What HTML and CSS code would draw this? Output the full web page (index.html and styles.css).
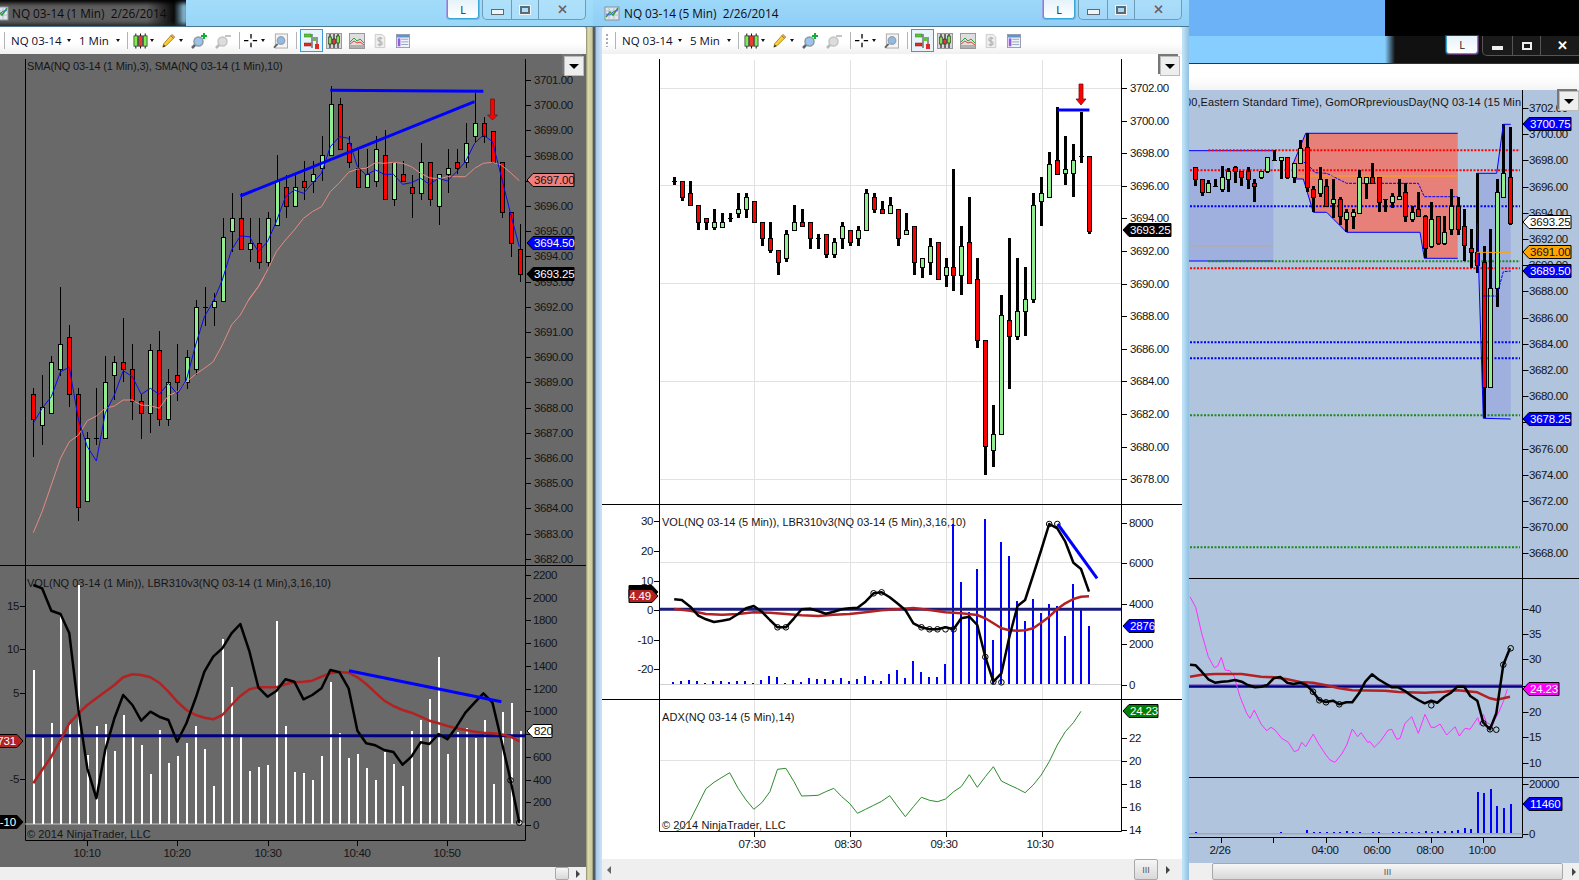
FILE: index.html
```html
<!DOCTYPE html>
<html lang="en">

<head>
    <meta charset="UTF-8">
    <title>NQ 03-14 charts</title>
    <link rel="stylesheet" href="styles.css">
</head>

<body>
    <!-- toolbar icons -->
    <svg class="icon-defs" xmlns="http://www.w3.org/2000/svg">
        <symbol id="ico-title" viewBox="0 0 16 16">
            <rect x="1" y="2" width="14" height="13" fill="#dfe6ee" stroke="#8a8f9a" />
            <path d="M1 6h14M1 10h14M5 2v13M10 2v13" stroke="#b9c0ca" fill="none" />
            <path d="M2 12l4-5 3 3 5-7" stroke="#2f9e3f" stroke-width="1.5" fill="none" />
            <path d="M2 9l4 1 3-3 5-2" stroke="#3b6fd0" fill="none" />
        </symbol>
        <symbol id="ico-candles" viewBox="0 0 16 16">
            <path d="M3 0v16M8 0v16M13 0v16" stroke="#000" />
            <rect x="1" y="2.500" width="4" height="11" fill="#7cf04a" stroke="#333" stroke-width=".8" />
            <rect x="6" y="2.500" width="4" height="11" fill="#f03a2e" stroke="#333" stroke-width=".8" />
            <rect x="11" y="2.500" width="4" height="11" fill="#7cf04a" stroke="#333" stroke-width=".8" />
        </symbol>
        <symbol id="ico-pencil" viewBox="0 0 16 16">
            <path d="M1 15l1-4 8-9 3 3-8 8z" fill="#f7cf3a" stroke="#a87a10" />
            <path d="M10 2l1.500-1.500 3 3L13 5z" fill="#e8a0a0" stroke="#a87a10" />
            <path d="M1 15l1-3 2 2z" fill="#333" />
        </symbol>
        <symbol id="ico-zoom-in" viewBox="0 0 16 16">
            <path d="M5 11l-4 4" stroke="#5b6470" stroke-width="2.500" />
            <circle cx="7.500" cy="8.500" r="4.500" fill="#9cc4e8" stroke="#8c98a5" stroke-width="1.500" />
            <path d="M13 0v6M10 3h6" stroke="#10b030" stroke-width="2" />
        </symbol>
        <symbol id="ico-zoom-out" viewBox="0 0 16 16">
            <path d="M5 11l-4 4" stroke="#b8b8b8" stroke-width="2.500" />
            <circle cx="7.500" cy="8.500" r="4.500" fill="#dcdcdc" stroke="#c4c4c4" stroke-width="1.500" />
            <path d="M10 3h6" stroke="#c4c4c4" stroke-width="2" />
        </symbol>
        <symbol id="ico-cross" viewBox="0 0 16 16">
            <path d="M8 0v5M8 10v5M0 7.500h5M10 7.500h5" stroke="#000" stroke-width="1.500" />
        </symbol>
        <symbol id="ico-find" viewBox="0 0 16 16">
            <rect x="2.500" y="0.500" width="13" height="15" fill="#f4f4f4" stroke="#a8a8a8" />
            <path d="M5 11l-4 4" stroke="#666" stroke-width="2" />
            <circle cx="8.500" cy="7.500" r="4" fill="#8fbce6" stroke="#9aa4ae" stroke-width="1.500" />
        </symbol>
        <symbol id="ico-flags" viewBox="0 0 16 16">
            <path d="M8 1v14M13 4v12" stroke="#333" />
            <rect x="0" y="1" width="7" height="3" fill="#5ec23a" stroke="#2c7a1c" stroke-width=".5" />
            <rect x="0" y="10" width="7" height="3" fill="#e02a20" stroke="#8a1a14" stroke-width=".5" />
            <rect x="9" y="4" width="3" height="4" fill="#5ec23a" />
            <rect x="11" y="11" width="4" height="5" fill="#e02a20" />
        </symbol>
        <symbol id="ico-framed-candles" viewBox="0 0 16 16">
            <rect x=".5" y=".5" width="15" height="15" fill="#d8d8d8" stroke="#999" />
            <path d="M4 1v14M8 1v14M12 1v14" stroke="#000" />
            <rect x="2.500" y="4" width="3" height="7" fill="#7ee04a" stroke="#222" stroke-width=".6" />
            <rect x="6.500" y="6" width="3" height="5" fill="#e93a2e" stroke="#222" stroke-width=".6" />
            <rect x="10.500" y="3" width="3" height="7" fill="#7ee04a" stroke="#222" stroke-width=".6" />
        </symbol>
        <symbol id="ico-framed-lines" viewBox="0 0 16 16">
            <rect x=".5" y=".5" width="15" height="15" fill="#dedede" stroke="#999" />
            <path d="M1 9l4-4 3 3 3-2 4 4" stroke="#2f9e3f" fill="none" />
            <path d="M1 11l4-3 3 2 3-1 4 3" stroke="#e0453a" fill="none" />
            <rect x="1" y="12" width="14" height="3" fill="#b0b0b0" />
        </symbol>
        <symbol id="ico-money" viewBox="0 0 16 16">
            <path d="M2.500.5h8l3 3v12h-11z" fill="#eee" stroke="#c8c8c8" />
            <path d="M10.500 5.500C9.500 4 5.500 4 5.500 6.500S10.500 8 10.500 10.500 6.500 13 5.500 11.500M8 3v11" fill="none" stroke="#b4b4b4" stroke-width="1.400" />
        </symbol>
        <symbol id="ico-sheet" viewBox="0 0 16 16">
            <rect x=".5" y=".5" width="15" height="15" fill="#f2f2fa" stroke="#8f95a8" />
            <rect x="1" y="1" width="14" height="3" fill="#5b96c8" />
            <rect x="2" y="5" width="3" height="9" fill="#9a58e8" />
            <path d="M6 6h8M6 9h8M6 12h8" stroke="#8aa0c0" />
        </symbol>
    </svg>

    <!-- left window, 1 min -->
    <section class="win win-one">
        <div class="titlebar">
            <div class="title-glow"></div>
            <svg class="title-icon"><use href="#ico-title" /></svg>
            <span class="title-text">NQ 03-14 (1 Min)  2/26/2014</span>
            <button class="link-btn">L</button>
            <div class="win-ctrls">
                <span class="ctrl ctrl-min"><i></i></span>
                <span class="ctrl ctrl-max"><i></i></span>
                <span class="ctrl ctrl-close">✕</span>
            </div>
        </div>
        <div class="toolbar">
            <span class="grip"></span>
            <span class="tb-sep m7"></span>
            <span class="tb-text tb-symbol m6">NQ 03-14</span>
            <span class="caret m6"></span>
            <span class="tb-text tb-interval m8">1 Min</span>
            <span class="caret m6"></span>
            <span class="tb-sep m7"></span>
            <svg class="tb-ico w15 m5"><use href="#ico-candles" /></svg>
            <span class="caret m2"></span>
            <svg class="tb-ico w14 m8"><use href="#ico-pencil" /></svg>
            <span class="caret m3"></span>
            <svg class="tb-ico w16 m8"><use href="#ico-zoom-in" /></svg>
            <svg class="tb-ico w16 m8"><use href="#ico-zoom-out" /></svg>
            <span class="tb-sep m8"></span>
            <svg class="tb-ico w14 m4"><use href="#ico-cross" /></svg>
            <span class="caret m3"></span>
            <svg class="tb-ico w15 m8"><use href="#ico-find" /></svg>
            <span class="tb-sep m8"></span>
            <span class="tb-toggle m3"><svg class="tb-ico w16"><use href="#ico-flags" /></svg></span>
            <svg class="tb-ico w16 m3"><use href="#ico-framed-candles" /></svg>
            <svg class="tb-ico w16 m7"><use href="#ico-framed-lines" /></svg>
            <svg class="tb-ico w14 m8"><use href="#ico-money" /></svg>
            <svg class="tb-ico w14 m9"><use href="#ico-sheet" /></svg>
        </div>
        <div class="chart chart-one">
            <svg id="chart-one" class="plot"></svg>
            <button class="panel-btn"></button>
        </div>
        <div class="scrollbar scroll-one">
            <span class="thumb"><b>III</b></span>
            <span class="arrow-right"></span>
        </div>
    </section>

    <!-- right window, 15 min, mostly covered -->
    <section class="win win-three">
        <div class="titlebar">
            <button class="link-btn">L</button>
            <div class="win-ctrls">
                <span class="ctrl ctrl-min"><i></i></span>
                <span class="ctrl ctrl-max"><i></i></span>
                <span class="ctrl ctrl-close">✕</span>
            </div>
        </div>
        <div class="toolbar"></div>
        <div class="chart chart-three">
            <svg id="chart-three" class="plot"></svg>
            <button class="panel-btn"></button>
        </div>
        <div class="scrollbar scroll-three">
            <span class="thumb"><b>III</b></span>
            <span class="arrow-right"></span>
        </div>
    </section>

    <!-- middle window, 5 min -->
    <section class="win win-two">
        <div class="titlebar">
            <svg class="title-icon"><use href="#ico-title" /></svg>
            <span class="title-text">NQ 03-14 (5 Min)  2/26/2014</span>
            <button class="link-btn">L</button>
            <div class="win-ctrls">
                <span class="ctrl ctrl-min"><i></i></span>
                <span class="ctrl ctrl-max"><i></i></span>
                <span class="ctrl ctrl-close">✕</span>
            </div>
        </div>
        <div class="toolbar">
            <span class="grip"></span>
            <span class="tb-sep m7"></span>
            <span class="tb-text tb-symbol m6">NQ 03-14</span>
            <span class="caret m6"></span>
            <span class="tb-text tb-interval m8">5 Min</span>
            <span class="caret m6"></span>
            <span class="tb-sep m7"></span>
            <svg class="tb-ico w15 m5"><use href="#ico-candles" /></svg>
            <span class="caret m2"></span>
            <svg class="tb-ico w14 m8"><use href="#ico-pencil" /></svg>
            <span class="caret m3"></span>
            <svg class="tb-ico w16 m8"><use href="#ico-zoom-in" /></svg>
            <svg class="tb-ico w16 m8"><use href="#ico-zoom-out" /></svg>
            <span class="tb-sep m8"></span>
            <svg class="tb-ico w14 m4"><use href="#ico-cross" /></svg>
            <span class="caret m3"></span>
            <svg class="tb-ico w15 m8"><use href="#ico-find" /></svg>
            <span class="tb-sep m8"></span>
            <span class="tb-toggle m3"><svg class="tb-ico w16"><use href="#ico-flags" /></svg></span>
            <svg class="tb-ico w16 m3"><use href="#ico-framed-candles" /></svg>
            <svg class="tb-ico w16 m7"><use href="#ico-framed-lines" /></svg>
            <svg class="tb-ico w14 m8"><use href="#ico-money" /></svg>
            <svg class="tb-ico w14 m9"><use href="#ico-sheet" /></svg>
        </div>
        <div class="chart chart-two">
            <svg id="chart-two" class="plot"></svg>
            <button class="panel-btn"></button>
        </div>
        <div class="scrollbar scroll-two">
            <span class="arrow-left"></span>
            <span class="thumb"><b>III</b></span>
            <span class="arrow-right"></span>
        </div>
    </section>

    <script src="charts.js"></script>
</body>

</html>
```

FILE: styles.css
```css
/* page */
html, body {
    margin: 0;
    height: 100%;
    overflow: hidden;
}

body {
    position: relative;
    background: linear-gradient(90deg, #6bb2f7 1385px, #000 1385px);
    font-family: "Liberation Sans", Arial, sans-serif;
}

.icon-defs {
    position: absolute;
    width: 0;
    height: 0;
}

/* windows on the desktop */
.win {
    position: absolute;
    top: 0;
    height: 880px;
    display: flex;
    flex-direction: column;
    box-sizing: border-box;
    padding: 0 7px 0 9px;
}

.win-one {
    left: -18px;
    width: 611px;
    background: linear-gradient(90deg, #c4e4f8 0 603px, #8a8a70 604px, #dcdcaa 606px, #c8c8a0 610px, #7a7a68 611px);
}

.win-two {
    left: 593px;
    width: 596px;
    background: linear-gradient(90deg, #4f5a68 0 2px, #a6c6e6 3px, #c8e0f8 8px, #c0e2f8 590px, #8fc0e0 596px);
}

.win-three {
    left: 1180px;
    top: 36px;
    width: 399px;
    height: 844px;
    padding: 0;
    background: #b0c4de;
}

/* title bar */
.titlebar {
    position: relative;
    height: 27px;
    flex: none;
    display: flex;
    align-items: flex-start;
    box-sizing: border-box;
    padding-top: 4px;
    border-bottom: 1px solid #4d7890;
    margin: 0 -7px 0 -9px;
    padding-left: 9px;
    padding-right: 7px;
    background: linear-gradient(#9cd8f8, #90cef7);
}

.win-one .titlebar {
    background: linear-gradient(#a2dcfa, #98d6f7);
}

.win-three .titlebar {
    margin: 0;
    height: 28px;
    padding: 0;
    border-bottom: 1px solid #333;
    background: linear-gradient(90deg, #85ceff 205px, #111 215px);
}

.title-glow {
    position: absolute;
    left: 0;
    top: 0;
    width: 204px;
    height: 26px;
    background: linear-gradient(90deg, #5e5e5e 165px, #0a0a0a 192px, rgba(0, 0, 0, 0) 204px);
    box-shadow: inset 0 5px 4px -2px #000, inset 0 -4px 4px -2px #222;
}

.title-icon {
    position: relative;
    width: 16px;
    height: 16px;
    margin: 1px 0 0 2px;
}

.title-text {
    position: relative;
    margin-left: 4px;
    margin-top: 1px;
    font-family: "Open Sans", sans-serif;
    font-size: 11.800px;
    line-height: 16px;
    white-space: pre;
    color: #0c0c10;
}

.win-one .title-text {
    margin-left: 3px;
}

.link-btn {
    flex: none;
    margin-left: auto;
    margin-top: -4px;
    width: 32px;
    height: 19px;
    padding: 0;
    border: 1px solid #3aa6d8;
    border-top: none;
    border-radius: 0 0 3px 3px;
    background: linear-gradient(#e6f2fa, #fff);
    box-shadow: 0 0 0 1px rgba(170, 90, 210, .45);
    font-family: "Open Sans", sans-serif;
    font-size: 11px;
    color: #222;
}

.win-ctrls {
    flex: none;
    display: flex;
    height: 19px;
    margin-top: -4px;
    margin-left: 3px;
    border: 1px solid #6c9cb8;
    border-top: none;
    border-radius: 0 0 5px 5px;
    background: rgba(255, 255, 255, .15);
}

.ctrl {
    display: flex;
    align-items: center;
    justify-content: center;
    border-left: 1px solid #6c9cb8;
    color: #5d6a74;
    font-size: 13px;
    font-weight: bold;
    text-shadow: 0 0 1px #fff;
}

.ctrl-min {
    width: 28px;
    border-left: none;
}

.ctrl-min i {
    width: 11px;
    height: 4px;
    margin-top: 5px;
    border: 1px solid #5d6a74;
    background: #eef4f8;
}

.ctrl-max {
    width: 26px;
}

.ctrl-max i {
    width: 6px;
    height: 4px;
    border: 2px solid #5d6a74;
    outline: 1px solid #eef4f8;
}

.ctrl-close {
    width: 46px;
}

.win-three .link-btn {
    margin: 0 4px 0 266px;
    height: 18px;
}

.win-three .win-ctrls {
    margin: 0;
    border-color: #555;
    background: #1a1a1a;
}

.win-three .ctrl {
    color: #fff;
    border-color: #555;
    text-shadow: none;
}

.win-three .ctrl-min {
    width: 29px;
}

.win-three .ctrl-max {
    width: 27px;
}

.win-three .ctrl-close {
    width: 42px;
}

.win-three .ctrl-min i {
    border: none;
    background: #eee;
}

.win-three .ctrl-max i {
    border-color: #eee;
    outline: none;
}

/* toolbar */
.toolbar {
    height: 27px;
    flex: none;
    display: flex;
    align-items: center;
    background: linear-gradient(#fff 60%, #f0f0f0);
    border-radius: 3px 3px 0 0;
}

.win-three .toolbar {
    background: linear-gradient(#fff 50%, #f4f4f4);
    border-radius: 0;
    height: 26px;
}

.grip {
    width: 2px;
    height: 13px;
    margin-left: 4px;
    background: repeating-linear-gradient(#aaa 0 2px, transparent 2px 4px);
}

.tb-sep {
    width: 1px;
    height: 17px;
    background: #b4b4b4;
}

.tb-text {
    font-family: "Open Sans", sans-serif;
    font-size: 11.500px;
    color: #0d0d30;
    white-space: nowrap;
}

.tb-symbol {
    width: 50px;
}

.tb-interval {
    width: 31px;
}

.caret {
    width: 0;
    height: 0;
    border: 2.500px solid transparent;
    border-top: 3px solid #111;
    border-bottom: none;
}

.tb-ico {
    height: 16px;
    flex: none;
}

.tb-toggle {
    display: flex;
    align-items: center;
    justify-content: center;
    width: 21px;
    height: 21px;
    border: 1px solid #3a9ad9;
    background: #e8f4fc;
}

.w14 { width: 14px; }
.w15 { width: 15px; }
.w16 { width: 16px; }

.m2 { margin-left: 2px; }
.m3 { margin-left: 3px; }
.m4 { margin-left: 4px; }
.m5 { margin-left: 5px; }
.m6 { margin-left: 6px; }
.m7 { margin-left: 7px; }
.m8 { margin-left: 8px; }
.m9 { margin-left: 9px; }

/* chart */
.chart {
    position: relative;
    flex: 1;
    min-height: 0;
}

.chart-one {
    background: #696969;
}

.chart-two {
    background: #fff;
}

.chart-three {
    background: #b0c4de;
}

.plot {
    display: block;
    width: 100%;
    height: 100%;
}

.panel-btn {
    position: absolute;
    top: 2px;
    right: 2px;
    width: 20px;
    height: 20px;
    padding: 0;
    border: 1px solid #bbb;
    background: #eee;
    box-shadow: -2px -2px 0 #777;
}

.panel-btn::after {
    content: "";
    display: block;
    margin: 0 auto;
    width: 0;
    border: 5px solid transparent;
    border-top: 5px solid #000;
    border-bottom: none;
}

.chart-three .panel-btn {
    right: 0;
    top: 1px;
}

.axis-text {
    font-family: "Liberation Sans", Arial, sans-serif;
    font-size: 11.500px;
    letter-spacing: -.4px;
    fill: #151515;
}

.legend-text {
    font-family: "Liberation Sans", Arial, sans-serif;
    font-size: 11px;
    letter-spacing: -.15px;
    fill: #151515;
}

.legend-wide {
    letter-spacing: 0;
}

.legend-wider {
    letter-spacing: .1px;
}

.tag-text {
    font-family: "Liberation Sans", Arial, sans-serif;
    font-size: 11.500px;
    letter-spacing: -.15px;
}

.crisp {
    shape-rendering: crispEdges;
}

/* scroll bar */
.scrollbar {
    flex: none;
    position: relative;
    display: flex;
    align-items: center;
    justify-content: flex-end;
    background: #efefef;
}

.scroll-one {
    height: 13px;
}

.scroll-two {
    height: 21px;
    justify-content: flex-start;
}

.scroll-three {
    height: 17px;
}

.thumb {
    display: flex;
    align-items: center;
    justify-content: center;
    box-sizing: border-box;
    height: 100%;
    border: 1px solid #a8a8a8;
    border-radius: 2px;
    background: linear-gradient(#f6f6f6, #d8d8d8);
}

.thumb b {
    font-family: "Liberation Sans", sans-serif;
    font-size: 9px;
    font-weight: normal;
    color: #555;
}

.scroll-one .thumb {
    width: 14px;
    margin-right: 17px;
}

.scroll-one .thumb b {
    display: none;
}

.scroll-two .thumb {
    width: 24px;
    margin-left: 523px;
}

.scroll-three .thumb {
    width: 351px;
    margin-right: 16px;
}

.arrow-right,
.arrow-left {
    width: 0;
    height: 0;
    border: 4px solid transparent;
}

.arrow-right {
    border-left: 4px solid #444;
    border-right: none;
}

.arrow-left {
    margin-left: 5px;
    border-right: 4px solid #666;
    border-left: none;
}

.scroll-one .arrow-right {
    position: absolute;
    right: 6px;
}

.scroll-two .arrow-right {
    margin-left: 8px;
}

.scroll-three .arrow-right {
    position: absolute;
    right: 3px;
}
```

FILE: charts.js
```js
// candles: [kind, bodyTop, bodyBottom, wickTop, wickBottom], kind r/g/d
const GREEN = '#90ee90', RED = '#ff0000', BLUE = '#0000ff', NAVY = '#000080';

function line(x1, y1, x2, y2, color, w, extra) {
    return `<line x1="${x1}" y1="${y1}" x2="${x2}" y2="${y2}" stroke="${color}" stroke-width="${w || 1}" ${extra || ''}/>`;
}

function label(x, y, text, anchor, cls) {
    return `<text x="${x}" y="${y + 4}" text-anchor="${anchor || 'start'}" class="${cls || 'axis-text'}">${text}</text>`;
}

function poly(list, fx, fy, color, w, extra) {
    const p = list.map(a => fx(a[0]).toFixed(1) + ',' + fy(a[1]).toFixed(1)).join(' ');
    return `<polyline points="${p}" fill="none" stroke="${color}" stroke-width="${w}" stroke-linejoin="round" ${extra || ''}/>`;
}

function circles(list, fx, fy) {
    return list.map(a => `<circle cx="${fx(a[0]).toFixed(1)}" cy="${fy(a[1]).toFixed(1)}" r="2.8" fill="none" stroke="#000"/>`).join('');
}

function candles(data, x0, step, fx, fy, wick, first) {
    let out = '<g class="crisp">';
    data.forEach((c, i) => {
        const x = Math.round(fx(x0 + step * (i + (first || 0))));
        const half = (wick - 1) / 2;
        const wt = Math.round(fy(c[3])), wb = Math.round(fy(c[4]));
        out += `<rect x="${x - half}" y="${wt}" width="${wick}" height="${wb - wt}" fill="#000"/>`;
        const t = Math.round(fy(c[1])), b = Math.round(fy(c[2]));
        if (c[0] === 'd') {
            out += `<rect x="${x - 2}" y="${t}" width="5" height="1" fill="#000"/>`;
        } else {
            out += `<rect x="${x - 2}" y="${t}" width="5" height="${b - t + 1}" fill="#000"/>`;
            out += `<rect x="${x - 1}" y="${t + 1}" width="3" height="${b - t - 1}" fill="${c[0] === 'g' ? GREEN : RED}"/>`;
        }
    });
    return out + '</g>';
}

function bars(list, x0, step, fx, fy, base, color, w) {
    return '<g class="crisp">' + list.map((top, i) => {
        const t = Math.round(fy(top));
        return `<rect x="${Math.round(fx(x0 + step * i))}" y="${t}" width="${w}" height="${Math.round(fy(base)) - t}" fill="${color}"/>`;
    }).join('') + '</g>';
}

// price marker with a point to the left, or to the right for the left scale
function tag(x, y, w, text, bg, fg, side) {
    const h = 13, t = y - h / 2, b = y + h / 2, r = x + w;
    const pts = side === 'right'
        ? `${x},${t} ${r - 6},${t} ${r},${y} ${r - 6},${b} ${x},${b}`
        : `${x},${y} ${x + 6},${t} ${r},${t} ${r},${b} ${x + 6},${b}`;
    const tx = side === 'right' ? r - 7 : x + 7;
    return `<polygon points="${pts}" fill="${bg}" stroke="#000"/>` +
        `<text x="${tx}" y="${y + 4}" text-anchor="${side === 'right' ? 'end' : 'start'}" class="tag-text" fill="${fg}">${text}</text>`;
}

function arrowDown(x, top, shaftEnd, tip) {
    return `<polygon points="${x - 2},${top} ${x + 2},${top} ${x + 2},${shaftEnd} ${x + 5},${shaftEnd} ${x},${tip} ${x - 5},${shaftEnd} ${x - 2},${shaftEnd}" fill="${RED}" stroke="#7a1010" stroke-width=".8"/>`;
}

function mount(id, vb, body) {
    const el = document.getElementById(id);
    el.setAttribute('viewBox', vb.join(' '));
    el.innerHTML = body;
}

/* ---------- left window, 1 min ---------- */
function drawOne() {
    const fx = X => X / 2.613;
    const top = Y => Y / 3, low = Y => 280 + Y / 3, pane = Y => 570 + Y / 3;
    const early = [
        ['r',343,418,325,532],['g',382,436,285,495],['g',247,400,228,400],['g',193,268,20,288],
        ['r',172,343,135,382],['r',343,682,325,722],['g',475,664,457,664],['d',475,475,325,495],
        ['g',305,475,228,475],['g',247,286,228,360],['r',247,268,115,305],['r',268,362,192,420],
        ['r',362,400,343,476],['g',211,400,192,458],['r',211,418,153,437],['g',305,418,268,437],
        ['r',286,305,192,362],['g',230,305,210,327],['g',80,268,60,286],['d',80,80,20,137],
        ['g',62,80,40,137]
    ];
    const late = [
        ['g',712,902,655,902],['g',655,692,580,755],['r',655,748,580,748],['g',730,748,655,785],
        ['r',730,786,655,806],['g',655,786,635,806],['g',542,674,466,674],['r',560,617,525,655],
        ['g',560,617,525,617],['r',542,560,484,600],['g',523,542,484,580],['g',466,503,408,542],
        ['g',313,466,258,466],['r',313,448,295,448],['r',428,485,408,503],['r',503,560,448,560],
        ['g',523,560,448,560],['g',448,542,408,560],['r',466,598,390,598],['g',485,598,485,617],
        ['r',523,542,484,542],['r',560,580,525,655],['g',485,580,428,600],['r',485,598,485,617],
        ['g',523,617,523,674],['g',503,523,448,580],['r',485,503,448,523],['g',428,485,370,503],
        ['g',370,408,280,428],['r',370,408,350,428],['r',392,485,392,485],['r',485,635,485,655],
        ['r',635,730,635,770],['r',748,823,672,845]
    ];
    const smaFastLow = [[87,430],[110,385],[134,350],[158,275],[181,262],[205,420],[228,500],[252,543],[275,400],[299,345],[322,272],[346,290],[369,343],[393,325],[416,343],[440,310],[463,342],[487,300],[511,195],[534,110],[557,65],[581,0]];
    const smaFastTop = [[581,840],[605,750],[628,708],[652,710],[675,755],[699,725],[722,665],[746,590],[769,570],[793,580],[816,550],[840,520],[863,440],[887,410],[911,415],[934,500],[957,525],[981,510],[1004,523],[1028,523],[1052,553],[1075,548],[1099,535],[1122,553],[1146,535],[1169,543],[1193,515],[1216,485],[1240,430],[1263,405],[1287,425],[1310,530],[1334,640],[1357,740]];
    const smaSlowLow = [[87,758],[110,695],[134,615],[158,535],[181,485],[205,465],[228,422],[252,408],[275,385],[299,378],[322,360],[346,360],[369,375],[393,377],[416,385],[440,347],[463,335],[487,305],[511,283],[534,265],[557,245],[581,195],[605,135],[628,105],[652,55],[675,20],[690,-10]];
    const smaSlowTop = [[650,900],[675,860],[699,810],[722,755],[746,720],[769,690],[793,655],[816,635],[840,620],[863,575],[887,548],[911,517],[934,507],[957,505],[981,488],[1004,490],[1028,487],[1052,490],[1075,500],[1099,520],[1122,533],[1146,537],[1169,530],[1193,530],[1216,530],[1240,505],[1263,490],[1287,487],[1310,495],[1334,518],[1357,542]];
    const vol = [300,505,460,135,462,45,555,467,462,543,435,500,525,612,480,580,558,518,468,537,648,207,350,500,603,590,585,153,467,606,608,630,558,335,490,564,552,594,630,545,582,648,484,450,387,262,552,487,475,504,450,642,426,400,484];
    const osc = [[87,45],[110,55],[134,122],[158,132],[181,190],[205,420],[228,595],[252,685],[275,540],[299,445],[322,375],[346,405],[369,452],[393,425],[416,440],[440,450],[463,515],[487,460],[511,385],[534,305],[557,260],[581,235],[605,190],[628,162],[652,245],[675,352],[699,380],[722,363],[746,328],[769,335],[793,388],[816,375],[840,355],[863,300],[887,307],[911,355],[934,482],[957,520],[981,526],[1004,540],[1028,546],[1052,584],[1075,560],[1099,517],[1122,522],[1146,492],[1169,508],[1193,470],[1216,428],[1240,398],[1263,370],[1287,398],[1310,510],[1334,630],[1357,758]];
    const sig = [[87,640],[110,600],[134,560],[158,510],[181,460],[205,430],[228,405],[252,385],[275,365],[299,345],[322,322],[346,313],[369,315],[393,322],[416,338],[440,365],[463,395],[487,420],[511,435],[534,443],[557,448],[581,435],[605,405],[628,378],[652,358],[675,352],[699,352],[722,352],[746,343],[769,337],[793,335],[816,332],[840,320],[863,310],[887,306],[911,308],[934,322],[957,342],[981,368],[1004,392],[1028,408],[1052,420],[1075,428],[1099,440],[1122,452],[1146,460],[1169,468],[1193,475],[1216,480],[1240,485],[1263,488],[1287,490],[1310,493],[1334,500],[1357,514]];

    let s = '';
    // axes
    s += line(25.5, 59, 25.5, 840.5, '#000') + line(525.5, 59, 525.5, 840.5, '#000');
    s += line(-9, 565.5, 586, 565.5, '#000') + line(25.5, 840.5, 525.5, 840.5, '#000');
    for (let p = 3701; p >= 3682; p--) {
        const y = Math.round(80 + (3701 - p) * 25.2);
        s += line(526, y + .5, 531, y + .5, '#000') + label(534, y, p + '.00');
    }
    for (let v = 0; v <= 2200; v += 200) {
        const y = Math.round(825 - v * 250 / 2200);
        s += line(526, y + .5, 531, y + .5, '#000') + label(533, y, v);
    }
    [[15,107],[10,237],[5,368],[-5,627]].forEach(a => {
        const y = Math.round(pane(a[1]));
        s += line(20, y + .5, 25, y + .5, '#000') + label(19, y, a[0], 'end');
    });
    [[228,'10:10'],[463,'10:20'],[699,'10:30'],[934,'10:40'],[1169,'10:50']].forEach(a => {
        const x = Math.round(fx(a[0]));
        s += line(x + .5, 841, x + .5, 846, '#000') + label(x, 853, a[1], 'middle');
    });
    // legends
    s += label(27, 66, 'SMA(NQ 03-14 (1 Min),3), SMA(NQ 03-14 (1 Min),10)', 'start', 'legend-text');
    s += label(27, 583, 'VOL(NQ 03-14 (1 Min)), LBR310v3(NQ 03-14 (1 Min),3,16,10)', 'start', 'legend-text legend-wide');
    s += label(27, 834, '© 2014 NinjaTrader, LLC', 'start', 'legend-text legend-wider');
    // price pane
    s += candles(early, 87, 23.55, fx, low, 1);
    s += candles(late, 87, 23.55, fx, top, 1, 21);
    s += poly(smaSlowLow, fx, low, '#e58a84', 1) + poly(smaSlowTop, fx, top, '#e58a84', 1);
    s += poly(smaFastLow, fx, low, '#0a0af0', 1) + poly(smaFastTop, fx, top, '#0a0af0', 1);
    s += line(fx(628), top(588), fx(1240), top(305), BLUE, 3);
    s += line(fx(863), top(271), fx(1263), top(274), BLUE, 3);
    s += arrowDown(492.5, 99, 115, 120);
    // indicator pane
    s += line(25, pane(762), 525, pane(762), '#c8c8c8');
    s += bars(vol, 86, 23.55, fx, pane, 762, '#fff', 2);
    s += line(25, pane(497), 525, pane(497), NAVY, 3);
    s += poly(sig, fx, pane, '#b22222', 2.5);
    s += poly(osc, fx, pane, '#000', 2.5);
    s += circles([[1334,631],[1357,758]], fx, pane);
    s += line(fx(912), pane(302), fx(1310), pane(395), BLUE, 3);
    // markers
    s += tag(527, 180, 47, '3697.00', '#f08080', '#111');
    s += tag(527, 243, 47, '3694.50', BLUE, '#fff');
    s += tag(527, 274, 47, '3693.25', '#000', '#fff');
    s += tag(527, 731, 25, '820', '#fff', '#111');
    s += tag(-9, 741, 32, '731', '#b22222', '#fff', 'right');
    s += tag(-9, 822, 32, '-10', '#000', '#fff', 'right');
    mount('chart-one', [-9, 54, 595, 813], s);
}

/* ---------- middle window, 5 min ---------- */
function drawTwo() {
    const cx = X => 650 + X / 2.958, cy = Y => 170 + Y / 3;
    const fx = X => 590 + X / 2.613, fy = Y => 500 + Y / 3;
    const data = [
        ['d',33,33,20,45],['r',34,82,34,92],['r',70,106,34,106],['r',106,157,106,180],['r',145,157,145,180],
        ['g',157,170,118,180],['g',157,170,130,170],['d',145,145,130,156],['g',118,130,70,143],['g',82,118,70,143],
        ['r',94,157,94,157],['r',157,205,157,227],['r',205,241,157,250],['r',241,277,241,314],['g',193,265,181,275],
        ['g',157,181,106,181],['r',157,169,118,169],['r',157,205,157,238],['d',205,205,193,238],['r',193,253,193,263],
        ['g',217,253,205,263],['g',169,205,157,238],['r',181,217,181,227],['g',181,205,169,227],['g',70,181,58,181],
        ['r',82,118,70,128],['r',118,130,94,130],['g',106,130,82,130],['r',118,205,118,227],['g',181,193,130,193],
        ['r',169,277,169,314],['g',265,291,265,325],['g',229,277,205,314],['r',217,328,217,328],['g',291,315,265,350],
        ['r',291,316,-3,362],['g',229,315,168,374],['r',217,340,82,340],['r',328,511,265,533],['r',511,829,511,914],
        ['g',793,841,706,890],['g',436,793,376,793],['r',451,499,205,656],['g',424,499,265,509],['g',388,424,292,497],
        ['g',106,388,70,398],['g',70,94,22,167],['g',-17,82,-53,82],['r',-29,11,-188,11],['g',-2,10,-102,45],
        ['g',-29,10,-78,80],['d',-42,-42,-175,-20],['r',-42,182,-42,192]
    ];
    const vol = [547,544,540,544,549,544,544,546,544,544,549,541,529,531,549,541,547,534,538,538,541,535,544,538,528,541,544,522,510,534,483,517,531,531,492,72,245,335,207,58,420,127,168,303,362,297,340,312,318,408,252,330,378];
    const osc = [[220,298],[240,300],[262,320],[283,347],[303,358],[324,366],[345,362],[365,358],[387,342],[408,325],[428,318],[449,335],[470,360],[490,382],[512,382],[533,355],[553,328],[575,326],[596,333],[616,341],[637,335],[658,328],[678,325],[699,323],[720,305],[741,280],[762,277],[783,292],[803,310],[824,330],[845,370],[866,382],[887,388],[908,388],[929,382],[950,388],[970,355],[991,350],[1012,375],[1033,471],[1054,545],[1075,520],[1096,410],[1117,318],[1137,300],[1158,225],[1179,150],[1200,72],[1221,85],[1242,125],[1263,188],[1283,207],[1304,275]];
    const sig = [[220,327],[262,332],[303,342],[345,344],[387,342],[428,337],[470,338],[512,342],[553,346],[596,348],[637,344],[678,342],[720,337],[762,331],[803,328],[845,324],[887,330],[929,337],[970,340],[1012,345],[1033,355],[1054,370],[1075,385],[1096,391],[1117,392],[1137,391],[1158,385],[1179,368],[1200,350],[1221,327],[1242,310],[1263,297],[1283,290],[1304,289]];
    const adx = [[216,1000],[240,985],[262,960],[303,866],[324,847],[345,832],[365,818],[387,865],[408,900],[428,928],[449,908],[470,875],[490,808],[512,805],[533,845],[553,888],[575,887],[596,886],[616,875],[637,865],[658,890],[678,910],[699,940],[720,928],[741,916],[762,904],[783,887],[803,918],[824,950],[845,920],[866,892],[887,901],[908,905],[929,897],[950,875],[970,860],[991,824],[1012,862],[1033,830],[1054,800],[1075,843],[1096,855],[1117,866],[1137,878],[1158,855],[1179,825],[1200,785],[1221,735],[1242,695],[1263,668],[1283,634]];
    const rings = [[490,382],[512,382],[741,280],[762,277],[866,382],[887,388],[908,388],[929,388],[950,388],[1033,471],[1054,545],[1075,547],[1200,72],[1221,72]];

    let s = '';
    // grid
    [754, 850, 946, 1042].forEach(x => { s += line(x + .5, 60, x + .5, 831, '#e2e2e2'); });
    [88, 185, 283, 381, 479, 562, 760].forEach(y => { s += line(660, y + .5, 1121, y + .5, '#e2e2e2'); });
    // axes
    s += line(659.5, 59, 659.5, 831.5, '#000') + line(1121.5, 59, 1121.5, 831.5, '#000');
    s += line(602, 504.5, 1182, 504.5, '#000') + line(602, 699.5, 1182, 699.5, '#000');
    s += line(659.5, 831.5, 1121.5, 831.5, '#000');
    for (let p = 3702, i = 0; p >= 3678; p -= 2, i++) {
        const y = Math.round(88 + i * 32.6);
        s += line(1122, y + .5, 1127, y + .5, '#000') + label(1130, y, p + '.00');
    }
    [[8000,69],[6000,189],[4000,311],[2000,432],[0,554]].forEach(a => {
        const y = Math.round(fy(a[1]));
        s += line(1122, y + .5, 1127, y + .5, '#000') + label(1129, y, a[0]);
    });
    [[22,713],[20,783],[18,852],[16,921],[14,990]].forEach(a => {
        const y = Math.round(fy(a[1]));
        s += line(1122, y + .5, 1127, y + .5, '#000') + label(1129, y, a[0]);
    });
    [[30,63],[20,152],[10,242],[0,330],[-10,419],[-20,507]].forEach(a => {
        const y = Math.round(fy(a[1]));
        s += line(654, y + .5, 659, y + .5, '#000') + label(653, y, a[0], 'end');
    });
    [[754,'07:30'],[850,'08:30'],[946,'09:30'],[1042,'10:30']].forEach(a => {
        s += line(a[0] + .5, 832, a[0] + .5, 837, '#000') + label(a[0] - 2, 844, a[1], 'middle');
    });
    s += label(662, 522, 'VOL(NQ 03-14 (5 Min)), LBR310v3(NQ 03-14 (5 Min),3,16,10)', 'start', 'legend-text legend-wide');
    s += label(662, 717, 'ADX(NQ 03-14 (5 Min),14)', 'start', 'legend-text legend-wider');
    s += label(662, 825, '© 2014 NinjaTrader, LLC', 'start', 'legend-text legend-wider');
    // price pane
    s += candles(data, 70, 23.65, cx, cy, 3);
    s += line(fx(1222), 110, fx(1305), 110, BLUE, 3);
    s += arrowDown(1081, 84, 99, 105);
    // indicator pane
    s += line(660, fy(552) + .5, 1121, fy(552) + .5, '#d0d0d0');
    s += bars(vol, 215, 20.9, fx, fy, 552, BLUE, 2);
    s += line(660, fy(328), 1121, fy(328), '#1c1c7c', 3);
    s += poly(sig, fx, fy, '#b22222', 2.5);
    s += poly(osc, fx, fy, '#000', 2.5);
    s += circles(rings, fx, fy);
    s += line(fx(1222), fy(72), fx(1325), fy(235), BLUE, 3);
    // adx pane
    s += `<clipPath id="adx-clip"><rect x="660" y="700" width="461" height="131"/></clipPath>`;
    s += poly(adx, fx, fy, '#2e8b2e', 1, 'clip-path="url(#adx-clip)"');
    // markers
    s += tag(1123, 230, 48, '3693.25', '#000', '#fff');
    s += tag(1123, 626, 31, '2876', BLUE, '#fff');
    s += tag(1123, 711, 35, '24.23', '#008000', '#fff');
    s += tag(629, 592, 29, '', '#000', '#fff', 'right');
    s += tag(629, 596, 29, '4.49', '#b22222', '#fff', 'right');
    mount('chart-two', [602, 54, 580, 805], s);
}

/* ---------- right window, 15 min ---------- */
function drawThree() {
    const fx = X => 1175 + X / 3;
    const fy = Y => Y / 3, low = Y => 570 + Y / 3;
    const data = [
        ['r',500,538,500,558],['r',538,577,538,587],['g',550,577,540,577],['d',558,558,538,560],['g',530,568,499,575],
        ['g',512,538,505,577],['r',500,512,498,548],['r',512,530,512,558],['r',512,538,500,568],['r',550,558,538,605],
        ['g',512,530,512,537],['g',470,512,470,518],['d',480,480,451,482],['g',470,480,470,537],['r',470,530,470,537],
        ['g',490,530,490,548],['g',444,490,420,492],['r',442,560,400,575],['r',568,590,558,637],['g',538,578,500,590],
        ['r',558,618,538,620],['g',598,608,538,655],['r',598,647,590,675],['g',637,658,628,695],['g',637,647,628,687],
        ['g',530,638,510,638],['g',530,550,530,597],['r',530,550,490,550],['r',530,607,530,635],['d',598,598,598,635],
        ['g',588,607,578,625],['g',588,598,538,598],['r',577,647,550,665],['g',637,658,618,665],['r',628,647,577,647],
        ['r',647,745,645,775],['g',658,738,607,745],['r',647,728,647,735],['g',697,728,647,735],['g',618,688,568,705],
        ['r',618,688,590,705],['r',677,735,628,782],['r',745,757,688,805],['r',757,796,520,820],['r',785,1160,737,1255],
        ['g',865,1160,688,1160],['g',577,865,538,920],['g',520,590,372,590],['r',530,668,382,675]
    ];
    const osc = [[45,284],[62,286],[80,305],[100,328],[120,338],[140,335],[160,334],[180,330],[200,335],[218,345],[240,352],[258,350],[277,345],[296,325],[316,321],[337,338],[355,342],[375,338],[394,345],[414,365],[433,390],[453,396],[474,392],[493,403],[514,397],[532,397],[552,370],[571,335],[591,313],[610,328],[630,340],[651,352],[670,352],[690,363],[709,377],[730,390],[749,400],[769,392],[787,398],[808,380],[828,368],[847,350],[868,350],[886,378],[907,392],[925,458],[945,478],[964,430],[985,284],[1005,235]];
    const sig = [[45,320],[80,314],[120,312],[200,312],[258,320],[296,322],[337,328],[375,336],[414,338],[453,346],[493,355],[532,361],[630,362],[670,366],[749,368],[808,365],[847,361],[907,367],[945,385],[964,389],[985,385],[1005,380]];
    const adx = [[45,80],[62,112],[80,190],[100,260],[118,293],[128,288],[139,262],[150,300],[165,302],[178,320],[195,380],[215,430],[225,445],[238,420],[258,462],[275,482],[288,472],[300,480],[320,505],[340,517],[358,545],[370,540],[380,517],[392,530],[415,492],[430,520],[453,555],[465,570],[480,577],[500,552],[515,525],[532,477],[548,500],[558,488],[578,517],[585,515],[598,532],[615,515],[640,480],[650,478],[665,508],[675,505],[690,460],[710,440],[730,490],[750,433],[768,472],[780,472],[795,462],[815,495],[840,470],[853,498],[870,475],[885,478],[908,443],[915,465],[925,433],[935,458],[950,465],[970,430],[985,395],[997,358]];
    const rings = [[414,365],[433,391],[453,397],[493,403],[769,406],[925,460],[945,478],[964,479],[985,284],[1007,235]];
    const small = [[60,786],[316,786],[393,780],[414,786],[433,786],[453,786],[474,786],[493,786],[514,783],[532,786],[552,786],[591,786],[610,786],[651,786],[670,786],[690,786],[709,786],[730,786],[749,784],[769,786],[787,784],[808,784],[828,784],[847,781],[868,774],[886,777],[907,666],[925,669],[945,657],[964,708],[985,714],[1005,702]];
    const zone = [[355,537],[385,537],[415,637],[455,637],[515,697],[735,697],[748,775],[848,775]];
    const zoneTop = [[355,490],[392,400],[848,400]];
    const zoneMid = [[375,483],[395,490],[420,518],[455,520],[515,550],[730,550],[748,590],[848,590]];

    const xy = (list, f) => list.map(a => fx(a[0]).toFixed(1) + ',' + f(a[1]).toFixed(1)).join(' ');
    let s = '';
    // shaded ranges
    s += `<rect x="${fx(40)}" y="${fy(452)}" width="${fx(295) - fx(40)}" height="${fy(783) - fy(452)}" fill="#9fb0de"/>`;
    s += `<polygon points="${xy(zoneTop, fy)} ${xy(zone.slice().reverse(), fy)}" fill="#e8807a"/>`;
    s += `<polygon points="${xy([[905,520],[965,520],[985,373],[1007,373],[1007,1250],[925,1255]], fy)}" fill="#9fb0de"/>`;
    s += line(fx(40), fy(452), fx(295), fy(452), BLUE) + line(fx(40), fy(783), fx(295), fy(783), BLUE);
    s += line(fx(40), fy(737), fx(295), fy(737), '#ffa500');
    // dotted levels
    const dots = 'stroke-dasharray="2 1.500"';
    [[100,451,RED],[45,511,RED],[45,805,RED],[45,619,BLUE],[100,784,'#1c8a1c'],[45,1027,BLUE],[45,1075,BLUE],[45,1246,'#1c8a1c'],[45,1642,'#1c8a1c']].forEach(d => {
        s += line(fx(d[0]), fy(d[1]), fx(1035), fy(d[1]), d[2], 2, dots);
    });
    // range outlines
    s += poly(zoneTop, fx, fy, BLUE, 1) + poly(zone, fx, fy, BLUE, 1);
    s += poly(zoneMid, fx, fy, BLUE, 1, 'stroke-dasharray="3 1"');
    s += line(fx(355), fy(528), fx(848), fy(528), '#ffa500', 1);
    s += candles(data, 61, 19.67, fx, fy, 3);
    s += poly([[905,520],[965,520],[985,373],[1007,373]], fx, fy, BLUE, 1);
    s += poly([[907,670],[925,1255],[1007,1257]], fx, fy, BLUE, 1);
    s += poly([[925,888],[965,888],[985,815],[1007,813]], fx, fy, BLUE, 1, 'stroke-dasharray="3 1"');
    s += line(fx(905), fy(757), fx(1007), fy(757), '#ffa500', 1);
    // axes
    const ax = Math.round(fx(1040)) + .5;
    s += line(ax, 90, ax, 837.5, '#000');
    s += line(1182, 578.5, 1579, 578.5, '#000') + line(1182, 777.5, 1579, 777.5, '#000') + line(1182, 837.5, ax, 837.5, '#000');
    for (let p = 3702, i = 0; p >= 3668; p -= 2, i++) {
        const y = Math.round(108 + i * 26.2);
        s += line(ax, y + .5, ax + 6, y + .5, '#000') + label(1529, y, p + '.00');
    }
    [[40,117],[35,192],[30,268],[25,347],[20,425],[15,502],[10,578]].forEach(a => {
        const y = Math.round(low(a[1]));
        s += line(ax, y + .5, ax + 6, y + .5, '#000') + label(1529, y, a[0]);
    });
    [[20000,642],[0,792]].forEach(a => {
        const y = Math.round(low(a[1]));
        s += line(ax, y + .5, ax + 6, y + .5, '#000') + label(1529, y, a[0]);
    });
    [[139,'2/26'],[295,''],[453,'04:00'],[610,'06:00'],[769,'08:00'],[925,'10:00']].forEach(a => {
        const x = Math.round(fx(a[0]));
        s += line(x + .5, 838, x + .5, 843, '#000') + label(x - 1, 850, a[1], 'middle');
    });
    s += `<clipPath id="legend-clip"><rect x="1182" y="90" width="340" height="30"/></clipPath>`;
    s += `<g clip-path="url(#legend-clip)">` + label(1185, 102, '00,Eastern Standard Time), GomORpreviousDay(NQ 03-14 (15 Min', 'start', 'legend-text legend-wider') + '</g>';
    // indicator pane
    s += line(fx(40), low(349), ax, low(349), NAVY, 3) + line(fx(40), low(349) - 1, ax, low(349) - 1, '#a000c0', 1);
    s += poly(adx, fx, low, '#ff30ff', 1);
    s += poly(sig, fx, low, '#b22222', 2.5);
    s += poly(osc, fx, low, '#000', 2.5);
    s += circles(rings, fx, low);
    // volume pane
    s += line(fx(40), low(790) + .5, ax, low(790) + .5, '#9a9a9a');
    s += '<g class="crisp">' + small.map(a => `<rect x="${Math.round(fx(a[0]))}" y="${Math.round(low(a[1]))}" width="2" height="${Math.round(low(789)) - Math.round(low(a[1]))}" fill="${BLUE}"/>`).join('') + '</g>';
    // markers
    s += tag(1523, 124, 48, '3700.75', BLUE, '#fff');
    s += tag(1523, 222, 48, '3693.25', '#fff', '#111');
    s += tag(1523, 252, 48, '3691.00', '#ffa500', '#111');
    s += tag(1523, 271, 48, '3689.50', BLUE, '#fff');
    s += tag(1523, 419, 48, '3678.25', BLUE, '#fff');
    s += tag(1523, 689, 36, '24.23', '#ff00ff', '#fff');
    s += tag(1523, 804, 39, '11460', BLUE, '#fff');
    mount('chart-three', [1180, 90, 399, 773], s);
}

drawOne();
drawTwo();
drawThree();
```
